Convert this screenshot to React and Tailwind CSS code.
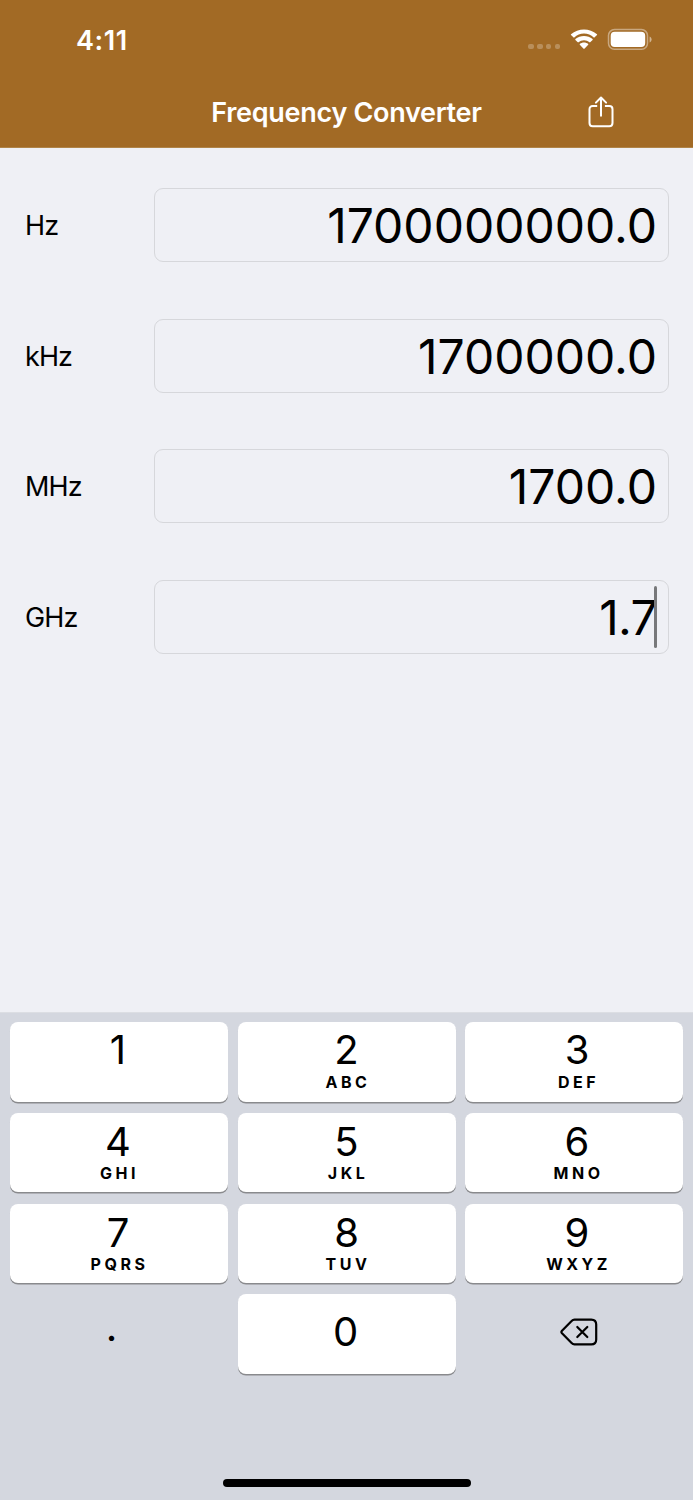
import React from "react";

const fields = [
  { unit: "Hz", value: "1700000000.0" },
  { unit: "kHz", value: "1700000.0" },
  { unit: "MHz", value: "1700.0" },
  { unit: "GHz", value: "1.7", active: true },
];

const keys = [
  ["1", ""],
  ["2", "ABC"],
  ["3", "DEF"],
  ["4", "GHI"],
  ["5", "JKL"],
  ["6", "MNO"],
  ["7", "PQRS"],
  ["8", "TUV"],
  ["9", "WXYZ"],
];

// Horizontal nudge of the labels in the left, middle and right key columns.
const columnPadding = ["pr-[2px]", "", "pl-[6px]"];

function WifiIcon() {
  return (
    <svg className="ml-[10px] h-[21px] w-[28px]" viewBox="0 0 28 21" fill="#fff">
      <path d="M14 4.6c3.700 0 7.100 1.400 9.700 3.900.2.2.5.2.7 0l2.600-2.500c.2-.2.2-.6 0-.8C19.700-1.200 8.300-1.200 1 5.200c-.2.2-.2.6 0 .8l2.600 2.500c.2.2.5.2.7 0C6.900 6 10.300 4.600 14 4.600z" />
      <path d="M14 11.200c2 0 4 .8 5.500 2.100.2.2.5.2.7 0l2.400-2.400c.2-.2.2-.6 0-.8-4.800-4.200-12.400-4.200-17.200 0-.2.2-.2.6 0 .8l2.400 2.400c.2.2.5.2.7 0 1.500-1.300 3.500-2.100 5.500-2.100z" />
      <path d="M18.200 15.800c.2-.2.2-.6 0-.8-2.400-2-6-2-8.400 0-.2.2-.2.6 0 .8l3.800 4c.2.2.6.2.8 0z" />
    </svg>
  );
}

function BatteryIcon() {
  return (
    <svg className="ml-[10px] h-[22px] w-[45px] overflow-visible" viewBox="0 0 45 22">
      <rect x="0.500" y="0.600" width="39" height="19.600" rx="6" fill="none" stroke="#fff" strokeOpacity="0.42" strokeWidth="1.500" />
      <rect x="2.700" y="2.700" width="34.500" height="15.400" rx="4" fill="#fff" />
      <path d="M41.600 7.400c1.200.5 2 1.700 2 3s-.8 2.600-2 3.100z" fill="#fff" fillOpacity="0.5" />
    </svg>
  );
}

function ShareIcon() {
  return (
    <svg className="h-[32px] w-[26px]" viewBox="0 0 26 32" fill="none" stroke="#fff" strokeWidth="2" strokeLinecap="round" strokeLinejoin="round">
      <path strokeLinecap="butt" d="M9.200 10H4.700C2.700 10 1.500 11.200 1.500 13.200V27C1.500 29 2.700 30.200 4.700 30.200H21.300C23.300 30.200 24.500 29 24.500 27V13.200C24.500 11.200 23.300 10 21.300 10H16.900" />
      <path d="M13 1.700V19.700M7.900 6.600L13 1.500L18.100 6.600" />
    </svg>
  );
}

function DeleteIcon() {
  return (
    <svg className="h-[29px] w-[38px]" viewBox="0 0 38 29" fill="none" stroke="#000" strokeWidth="2.200" strokeLinecap="round" strokeLinejoin="round">
      <path d="M14.500 1.600H31.300Q36.200 1.600 36.200 6.500V21.500Q36.200 26.400 31.300 26.400H14.500Q12.800 26.400 11.600 25.100L2 15.300Q.8 14 2 12.700L11.600 2.900Q12.800 1.600 14.500 1.600Z" />
      <path d="M17.300 9L27.300 19M27.300 9L17.300 19" />
    </svg>
  );
}

function StatusBar() {
  return (
    <div className="flex h-[79px] items-center justify-between pl-[76px] pr-[40px]">
      <span className="pt-px text-[27px] font-semibold leading-none tracking-[0.600px]">4:11</span>
      <div className="flex items-center">
        <div className="mt-[14px] flex gap-[3.200px]">
          {[0, 1, 2, 3].map((i) => (
            <span key={i} className="h-[5.500px] w-[5.500px] rounded-[2px] bg-white/25" />
          ))}
        </div>
        <WifiIcon />
        <BatteryIcon />
      </div>
    </div>
  );
}

function Field({ unit, value, active }) {
  return (
    <div className="flex h-[74px] items-center">
      <label className="w-[129px] pt-px text-[27px] leading-none tracking-[-0.900px]">{unit}</label>
      <div className="relative flex h-full flex-1 items-center justify-end rounded-[9px] border border-[#d6d7db] pr-[11px]">
        <span className={active ? "pt-[2px] text-[48px] leading-none tracking-[-0.700px]" : "pt-[2px] text-[48px] leading-none"}>{value}</span>
        {active && <span className="absolute right-[11px] top-[5px] h-[62px] w-[3px] rounded-full bg-[#77787a]" />}
      </div>
    </div>
  );
}

function Key({ digit, letters, first, padding }) {
  return (
    <div className={"flex h-[79.500px] flex-col items-center rounded-[8px] bg-white shadow-[0_1.500px_0_#898a8d] " + padding}>
      <span className={first ? "mt-[7px] h-[41px] text-[40px] leading-[42px]" : "mt-[8px] h-[40px] text-[40px] leading-[42px]"}>{digit}</span>
      <span className="mt-[4px] pl-[3px] text-[16px] font-bold leading-[17px] tracking-[3.500px]">{letters}</span>
    </div>
  );
}

export default function App() {
  return (
    <div className="flex h-[1500px] w-[693px] flex-col overflow-hidden bg-[#eff0f5] font-['Inter',sans-serif] text-black">
      <header className="h-[148px] shrink-0 border-b border-[#b08448] bg-[#a26a25] text-white">
        <StatusBar />
        <div className="grid h-[66px] grid-cols-[1fr_auto_1fr] items-center">
          <span />
          <h1 className="text-[27px] font-semibold leading-none tracking-[-0.300px]">Frequency Converter</h1>
          <div className="flex justify-end pr-[79px]">
            <ShareIcon />
          </div>
        </div>
      </header>

      <main className="flex flex-1 flex-col gap-[56.700px] pl-[25px] pr-[24px] pt-[40px]">
        {fields.map((f) => (
          <Field key={f.unit} {...f} />
        ))}
      </main>

      <section className="flex h-[488px] shrink-0 flex-col border-t border-[#dcdee3] bg-[#d4d7df] px-[10px] pt-[9px]">
        <div className="grid grid-cols-3 gap-x-[9.500px] gap-y-[11.300px]">
          {keys.map(([digit, letters], i) => (
            <Key key={digit} digit={digit} letters={letters} first={i < 3} padding={columnPadding[i % 3]} />
          ))}
          <div className="flex items-center justify-center pb-[15px] pr-[15px]">
            <span className="text-[40px] leading-[40px]">.</span>
          </div>
          <div className="flex h-[79.500px] items-center justify-center rounded-[8px] bg-white pb-[4px] pr-[2px] shadow-[0_1.500px_0_#898a8d]">
            <span className="text-[40px] leading-none">0</span>
          </div>
          <div className="flex items-center justify-center pb-[3px] pl-[9px]">
            <DeleteIcon />
          </div>
        </div>
        <div className="mx-auto mb-[13px] mt-auto h-[8px] w-[248px] rounded-full bg-black" />
      </section>
    </div>
  );
}
